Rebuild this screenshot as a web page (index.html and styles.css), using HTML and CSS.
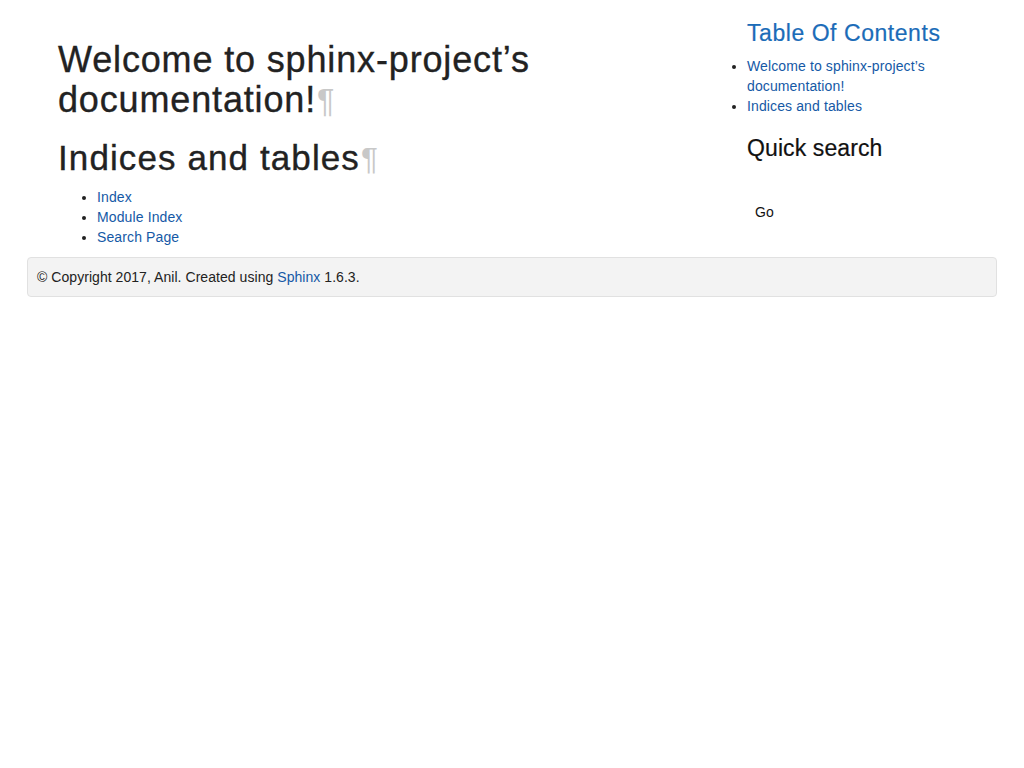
FILE: index.html
```html
<!DOCTYPE html>
<html lang="en">
<head>
<meta charset="utf-8">
<title>Welcome to sphinx-project’s documentation!</title>
<link rel="stylesheet" href="styles.css">
</head>
<body>
<div class="page">
  <div class="row">
    <div class="main">
      <h1 class="title">Welcome to sphinx-project’s documentation!<a class="headerlink" href="#">¶</a></h1>
      <h2 class="section">Indices and tables<a class="headerlink" href="#">¶</a></h2>
      <ul class="links">
        <li><a href="#">Index</a></li>
        <li><a href="#">Module Index</a></li>
        <li><a href="#">Search Page</a></li>
      </ul>
    </div>
    <div class="sidebar">
      <h3 class="toc-title"><a href="#">Table Of Contents</a></h3>
      <ul class="toc">
        <li><a href="#">Welcome to sphinx-project’s documentation!</a></li>
        <li><a href="#">Indices and tables</a></li>
      </ul>
      <h3 class="search-title">Quick search</h3>
      <form class="search">
        <button type="button" class="go">Go</button>
      </form>
    </div>
  </div>
  <footer class="footer">© Copyright 2017, Anil. Created using <a href="#">Sphinx</a> 1.6.3.</footer>
</div>
</body>
</html>
```

FILE: styles.css
```css
html, body {
  margin: 0;
  padding: 0;
  background: #fff;
}
body {
  font-family: "Liberation Sans", Arial, sans-serif;
  font-size: 14px;
  line-height: 20px;
  letter-spacing: 0.12px;
  color: #222;
}
a {
  color: #1559a6;
  text-decoration: none;
}
.page {
  width: 970px;
  margin: 0 auto;
}
.row {
  display: flex;
}
.main {
  width: 689px;
  padding-left: 31px;
}
.sidebar {
  width: 220px;
}
.title {
  font-size: 36px;
  font-weight: normal;
  line-height: 1.1;
  letter-spacing: 0.85px;
  margin: 40px 0 0;
  color: #222;
  -webkit-text-stroke: 0.35px #222;
}
.section {
  font-size: 35px;
  font-weight: normal;
  line-height: 1.1;
  letter-spacing: 1.1px;
  margin: 20px 0 0;
  color: #222;
  -webkit-text-stroke: 0.35px #222;
}
.headerlink {
  color: #c8c8c8;
  letter-spacing: 0;
  margin-left: 1px;
  -webkit-text-stroke: 0;
}
.title .headerlink,
.section .headerlink {
  font-size: 0.9em;
}
.links {
  margin: 9px 0 0;
  padding-left: 39px;
}
.toc-title {
  font-size: 23px;
  font-weight: normal;
  line-height: 1.1;
  letter-spacing: 0.55px;
  margin: 21px 0 0;
  -webkit-text-stroke: 0.2px #1b6cb8;
}
.toc-title a {
  color: #1b6cb8;
}
.toc {
  margin: 10px 0 0;
  padding-left: 0;
}
.search-title {
  font-size: 23px;
  font-weight: normal;
  line-height: 1.1;
  letter-spacing: 0.1px;
  margin: 20px 0 0;
  color: #111;
  -webkit-text-stroke: 0.2px #111;
}
.search {
  margin: 40px 0 0;
}
.go {
  font-family: "Liberation Sans", Arial, sans-serif;
  font-size: 14px;
  line-height: 20px;
  color: #111;
  background: none;
  border: none;
  padding: 0 0 0 8px;
  margin: 0;
}
.footer {
  margin-top: 10px;
  padding: 9px 9px;
  background: #f3f3f3;
  border: 1px solid #e1e1e1;
  border-radius: 4px;
  color: #222;
  letter-spacing: 0.05px;
}
```
